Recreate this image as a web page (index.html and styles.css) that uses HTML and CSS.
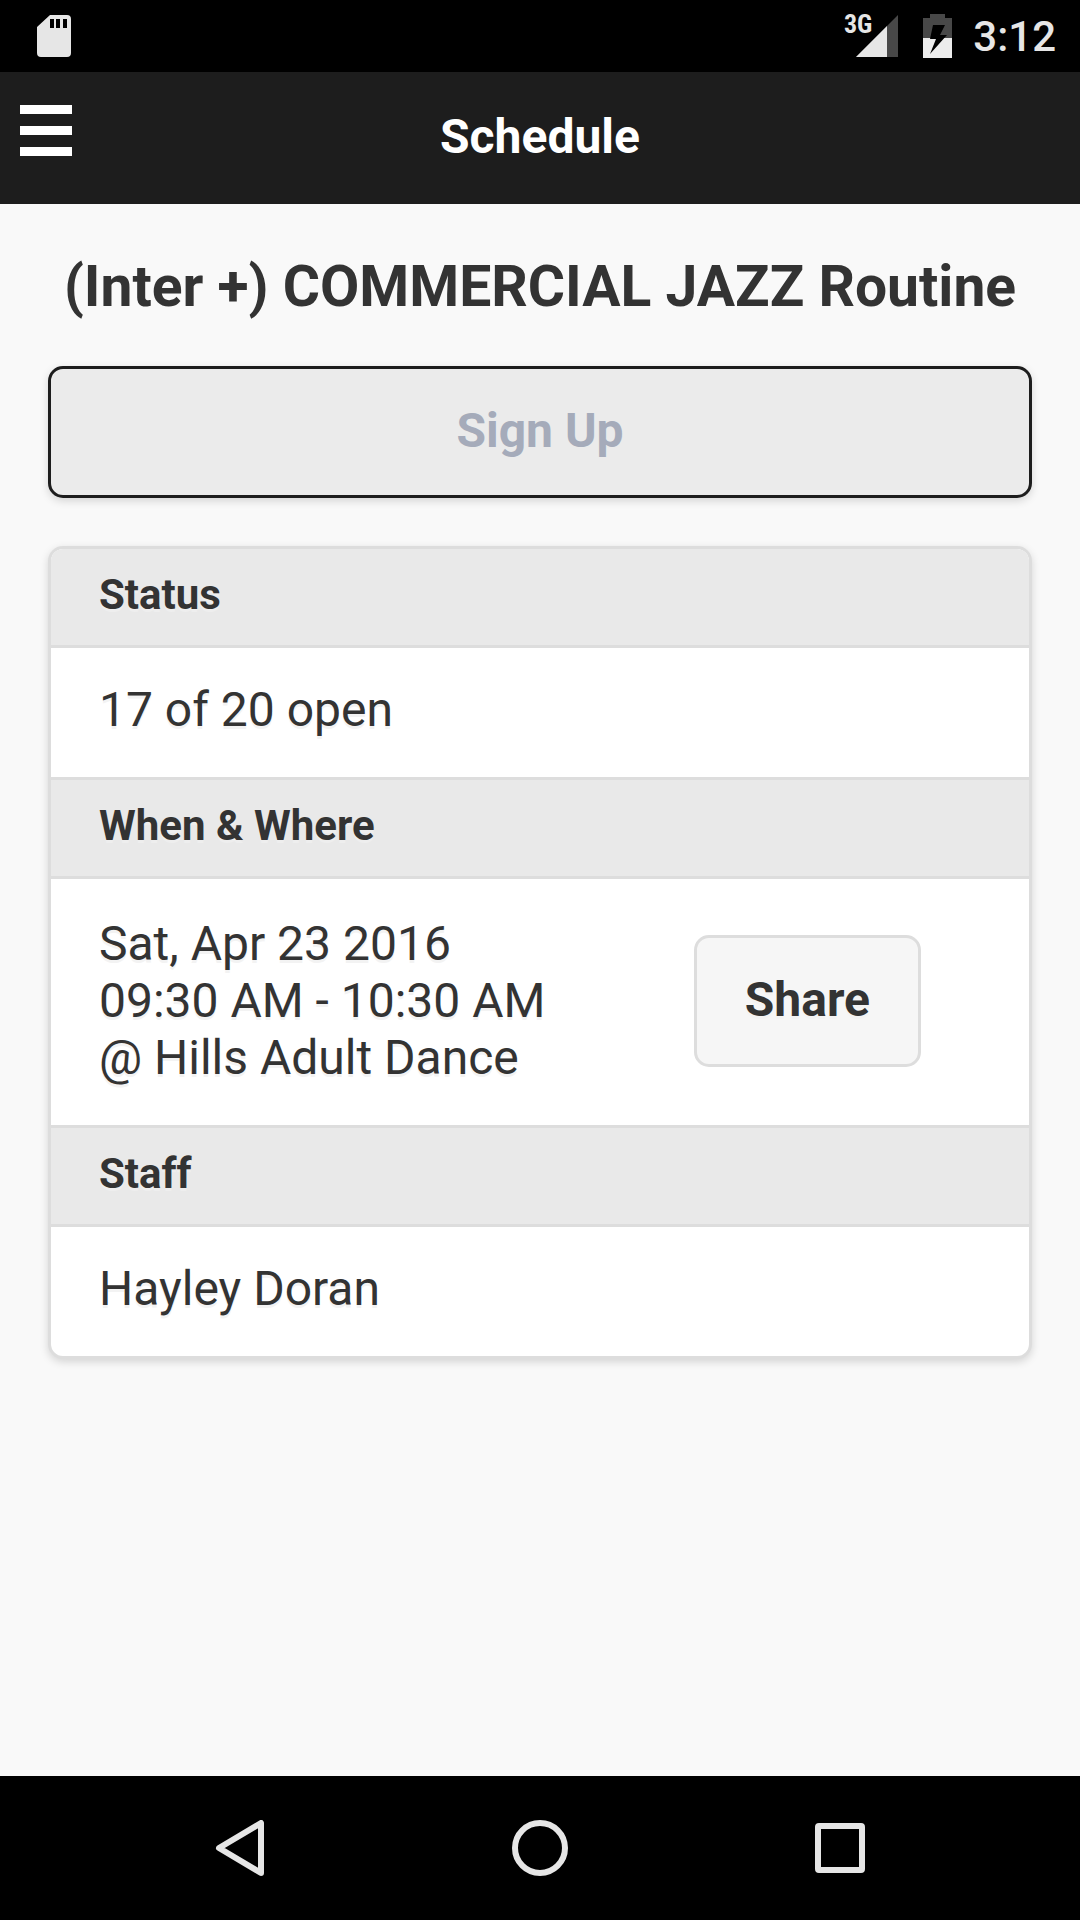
FILE: index.html
```
<!DOCTYPE html>
<html lang="en">
<head>
  <meta charset="UTF-8">
  <meta name="viewport" content="width=device-width, initial-scale=1.0">
  <title>Schedule</title>
  <link rel="stylesheet" href="styles.css">
</head>
<body>

  <!-- Status bar -->
  <div class="status-bar">
    <svg class="icon-sd" width="34" height="42" viewBox="0 0 34 42">
      <path fill="#e6e6e6" fill-rule="evenodd" d="M13 0H30Q34 0 34 4V38Q34 42 30 42H4Q0 42 0 38V12ZM13 4V13H17V4ZM19 4V13H23V4ZM26 4V13H30V4Z"/>
    </svg>
    <div class="status-right">
      <span class="network">3G</span>
      <svg class="icon-signal" width="42" height="42" viewBox="0 0 42 42">
        <path fill="#484848" d="M42 0V42H0Z"/>
        <path fill="#e6e6e6" d="M31 11V42H0Z"/>
      </svg>
      <svg class="icon-battery" width="29" height="44" viewBox="0 0 29 44">
        <path fill="#484848" d="M7 0H22V4H29V44H0V4H7Z"/>
        <path fill="#ececec" d="M0 24H29V44H0Z"/>
        <path fill="#000" d="M10 11H22L17 21H24L7 40L13 25H7Z"/>
      </svg>
      <span class="clock">3:12</span>
    </div>
  </div>

  <!-- Header -->
  <header class="header">
    <button class="menu-button" aria-label="Menu">
      <span class="bar"></span>
      <span class="bar"></span>
      <span class="bar"></span>
    </button>
    <h1>Schedule</h1>
  </header>

  <main class="content">
    <h2 class="class-name">(Inter +) COMMERCIAL JAZZ Routine</h2>
    <button class="btn sign-up" disabled>Sign Up</button>

    <ul class="list">
      <li class="divider">Status</li>
      <li class="item">17 of 20 open</li>
      <li class="divider">When &amp; Where</li>
      <li class="item item-when">
        <div>
          Sat, Apr 23 2016<br>
          09:30 AM - 10:30 AM<br>
          @ Hills Adult Dance
        </div>
        <button class="btn share">Share</button>
      </li>
      <li class="divider">Staff</li>
      <li class="item">Hayley Doran</li>
    </ul>
  </main>

  <!-- Bottom navigation -->
  <nav class="nav-bar">
    <button aria-label="Back">
      <svg width="56" height="56" viewBox="0 0 56 56">
        <path d="M49 3V53L7 28Z"/>
      </svg>
    </button>
    <button aria-label="Home">
      <svg width="56" height="56" viewBox="0 0 56 56">
        <circle cx="28" cy="28" r="25"/>
      </svg>
    </button>
    <button aria-label="Recent apps">
      <svg width="56" height="56" viewBox="0 0 56 56">
        <rect x="6" y="6" width="44" height="44" rx="1"/>
      </svg>
    </button>
  </nav>

</body>
</html>
```
FILE: styles.css
```
* {
  box-sizing: border-box;
}

body {
  display: flex;
  flex-direction: column;
  min-height: 100vh;
  margin: 0;
  background-color: #f9f9f9;
  color: #333;
  font-family: Roboto, sans-serif;
  font-size: 48px;
  line-height: 57px;
}

button {
  font-family: inherit;
  font-size: inherit;
  line-height: inherit;
  cursor: pointer;
}

/* Status bar */
.status-bar {
  display: flex;
  align-items: center;
  justify-content: space-between;
  height: 72px;
  padding: 0 24px 0 37px;
  background-color: #000;
  color: #e6e6e6;
}

.status-right {
  display: flex;
  align-items: center;
}

.network {
  align-self: flex-start;
  margin-right: -16px;
  font-family: "Roboto Condensed", Roboto, sans-serif;
  font-size: 26px;
  font-weight: bold;
  line-height: 32px;
}

.icon-battery {
  margin: 0 21px 0 25px;
}

.clock {
  font-size: 42px;
  font-weight: 500;
}

/* Header */
.header {
  display: grid;
  grid-template-columns: 92px 1fr 92px;
  height: 132px;
  background-color: #1d1d1d;
  color: #fff;
}

.header h1 {
  margin: 36px 0;
  font-size: 48px;
  text-align: center;
}

.menu-button {
  display: flex;
  flex-direction: column;
  gap: 12px;
  padding: 33px 20px;
  background: none;
  border: none;
}

.bar {
  width: 52px;
  height: 9px;
  background-color: #fff;
}

/* Content */
.content {
  flex: 1;
  padding: 48px;
}

.class-name {
  margin: 0 0 45px;
  font-size: 57px;
  line-height: 69px;
  text-align: center;
}

.btn {
  padding: 33px 48px 36px;
  border: 3px solid #ddd;
  border-radius: 15px;
  background-color: #f6f6f6;
  color: #333;
  font-weight: bold;
  text-shadow: 0 3px 0 #f3f3f3;
}

.sign-up {
  display: block;
  width: 100%;
  border-color: #1d1d1d;
  background-color: #ebebeb;
  color: #a5abba;
  text-shadow: none;
  box-shadow: 0 3px 9px rgba(0, 0, 0, 0.15);
}

.list {
  margin: 48px 0 0;
  padding: 0;
  overflow: hidden;
  border: 3px solid #ddd;
  border-radius: 15px;
  background-color: #fff;
  box-shadow: 0 3px 9px rgba(0, 0, 0, 0.15);
  list-style: none;
}

.divider {
  padding: 20px 48px 25px;
  background-color: #e9e9e9;
  border-bottom: 3px solid #ddd;
  font-size: 42px;
  font-weight: bold;
  line-height: 51px;
  text-shadow: 0 3px 0 #eee;
}

.item {
  padding: 33px 48px 39px;
  text-shadow: 0 3px 0 #f3f3f3;
}

.item + .divider {
  border-top: 3px solid #ddd;
}

.item-when {
  display: flex;
  align-items: center;
  justify-content: space-between;
  padding: 36px 108px 39px 48px;
}

/* Bottom navigation */
.nav-bar {
  display: grid;
  grid-template-columns: repeat(3, 1fr);
  height: 144px;
  padding: 0 90px;
  background-color: #000;
}

.nav-bar button {
  display: flex;
  align-items: center;
  justify-content: center;
  background: none;
  border: none;
}

.nav-bar svg {
  fill: none;
  stroke: #e6e6e6;
  stroke-width: 6;
  stroke-linejoin: round;
}
```
